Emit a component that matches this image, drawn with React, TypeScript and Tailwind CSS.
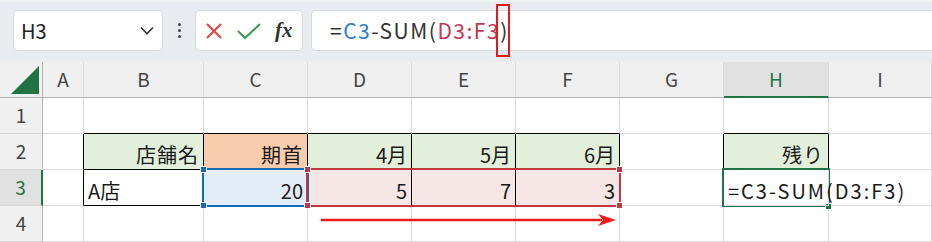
const COLS = ["", "A", "B", "C", "D", "E", "F", "G", "H", "I"];

const grid = "grid grid-cols-[43px_41px_120px_104px_104px_104px_104px_104px_105px_103px]";
const cell = "h-[36px] border-r border-b border-[#d9d9d9] flex items-end pb-[4px] px-[4px] text-[20px] leading-none text-[#1a1a1a]";

const Handle = ({ x, y, color }: { x: number; y: number; color: string }) => (
  <div
    className={`absolute w-[7px] h-[7px] border border-white ${color}`}
    style={{ left: x - 3, top: y - 3 }}
  />
);

export default function App() {
  return (
    <div className="w-[932px] h-[242px] overflow-hidden bg-white font-['Noto_Sans_CJK_JP',sans-serif]">
      {/* Formula bar */}
      <div className="h-[62px] bg-[#e8ebef] border-t-2 border-[#f2f4f6] flex items-start pt-[8px] pl-[13px] gap-[8px]">
        <div className="w-[150px] h-[41px] bg-white rounded-[5px] border border-[#d6d9dd] flex items-center justify-between pl-[7px] pr-[8px]">
          <span className="text-[20px] text-[#222]">H3</span>
          <svg width="14" height="9" viewBox="0 0 14 9">
            <polyline points="1,1.5 7,7.5 13,1.5" fill="none" stroke="#333" strokeWidth="1.6" />
          </svg>
        </div>
        <div className="w-[16px] h-[41px] flex flex-col items-center justify-center gap-[3px]">
          <span className="w-[3px] h-[3px] rounded-full bg-[#444]" />
          <span className="w-[3px] h-[3px] rounded-full bg-[#444]" />
          <span className="w-[3px] h-[3px] rounded-full bg-[#444]" />
        </div>
        <div className="w-[108px] h-[41px] bg-white rounded-[5px] border border-[#d6d9dd] flex items-center pl-[9px] gap-[14px]">
          <svg width="18" height="18" viewBox="0 0 18 18">
            <path d="M2 2 L16 16 M16 2 L2 16" stroke="#e8403f" strokeWidth="2" />
          </svg>
          <svg width="24" height="18" viewBox="0 0 24 18">
            <polyline points="1,9 8,16 23,2" fill="none" stroke="#3a9c4a" strokeWidth="2" />
          </svg>
          <span className="font-['Liberation_Serif',serif] italic font-bold text-[21px] text-[#333] leading-none">fx</span>
        </div>
        <div className="flex-1 h-[41px] bg-white rounded-l-[5px] border border-r-0 border-[#d6d9dd] flex items-center pl-[18px] text-[21px] tracking-[1.5px] text-[#333]">
          <span>=</span>
          <span className="text-[#2b7fd3]">C3</span>
          <span>-SUM(</span>
          <span className="text-[#c73452]">D3:F3</span>
          <span className="relative">
            )
            <span className="absolute left-[-4px] right-[-1px] top-[-11px] bottom-[-11px] border-2 border-[#e21b1b]" />
          </span>
        </div>
      </div>

      {/* Sheet */}
      <div className="relative">
        {/* Column headers */}
        <div className={grid}>
          <div className="h-[36px] bg-[#f0f0f0] border-r border-b border-[#b4b4b4] flex items-end justify-end pr-[3px] pb-[3px]">
            <svg width="28" height="28" viewBox="0 0 28 28">
              <polygon points="28,0 28,28 0,28" fill="#217346" />
            </svg>
          </div>
          {COLS.slice(1).map((c) =>
            c === "H" ? (
              <div key={c} className="h-[36px] bg-[#e1e1e1] border-r border-[#d9d9d9] border-b-2 border-b-[#217346] flex items-center justify-center text-[19px] text-[#217346]">
                {c}
              </div>
            ) : (
              <div key={c} className="h-[36px] bg-[#f0f0f0] border-r border-[#d9d9d9] border-b border-b-[#b4b4b4] flex items-center justify-center text-[19px] text-[#444]">
                {c}
              </div>
            )
          )}
        </div>

        {/* Row 1 */}
        <div className={grid}>
          <div className="h-[36px] bg-[#f0f0f0] border-r border-r-[#b4b4b4] border-b border-[#d9d9d9] flex items-center justify-center text-[19px] text-[#444]">1</div>
          <div className={cell} />
          <div className={`${cell} border-b-black`} />
          <div className={`${cell} border-b-black`} />
          <div className={`${cell} border-b-black`} />
          <div className={`${cell} border-b-black`} />
          <div className={`${cell} border-b-black`} />
          <div className={cell} />
          <div className={`${cell} border-b-black`} />
          <div className={cell} />
        </div>

        {/* Row 2 */}
        <div className={grid}>
          <div className="h-[36px] bg-[#f0f0f0] border-r border-r-[#b4b4b4] border-b border-[#d9d9d9] flex items-center justify-center text-[19px] text-[#444]">2</div>
          <div className={`${cell} border-r-black`} />
          <div className={`${cell} border-black bg-[#e2efda] justify-end tracking-[1px]`}>店舗名</div>
          <div className={`${cell} border-black bg-[#f8cbad] justify-end tracking-[1px]`}>期首</div>
          <div className={`${cell} border-black bg-[#e2efda] justify-end`}>4月</div>
          <div className={`${cell} border-black bg-[#e2efda] justify-end`}>5月</div>
          <div className={`${cell} border-black bg-[#e2efda] justify-end`}>6月</div>
          <div className={`${cell} border-r-black`} />
          <div className={`${cell} border-black bg-[#e2efda] justify-end tracking-[1px]`}>残り</div>
          <div className={cell} />
        </div>

        {/* Row 3 */}
        <div className={grid}>
          <div className="h-[36px] bg-[#e1e1e1] border-r-2 border-r-[#217346] border-b border-[#d9d9d9] flex items-center justify-center text-[19px] text-[#217346]">3</div>
          <div className={`${cell} border-r-black`} />
          <div className={`${cell} border-black`}>A店</div>
          <div className={`${cell} border-black bg-[#e3edf7] justify-end`}>20</div>
          <div className={`${cell} border-black bg-[#f6e6e6] justify-end`}>5</div>
          <div className={`${cell} border-black bg-[#f6e6e6] justify-end`}>7</div>
          <div className={`${cell} border-black bg-[#f6e6e6] justify-end`}>3</div>
          <div className={cell} />
          <div className={`${cell} overflow-visible whitespace-nowrap z-10 tracking-[2px]`}>=C3-SUM(D3:F3)</div>
          <div className={cell} />
        </div>

        {/* Row 4 */}
        <div className={grid}>
          <div className="h-[36px] bg-[#f0f0f0] border-r border-r-[#b4b4b4] border-b border-[#d9d9d9] flex items-center justify-center text-[19px] text-[#444]">4</div>
          {COLS.slice(1).map((c) => (
            <div key={c} className={cell} />
          ))}
        </div>

        {/* Selection overlays */}
        <div className="absolute left-[202px] top-[106px] w-[107px] h-[39px] border-2 border-[#1469b8]" />
        <div className="absolute left-[306px] top-[106px] w-[315px] h-[39px] border-2 border-[#c0383e]" />
        <div className="absolute left-[722px] top-[106px] w-[108px] h-[39px] border-2 border-[#217346]" />
        <Handle x={203} y={107} color="bg-[#1469b8]" />
        <Handle x={203} y={143} color="bg-[#1469b8]" />
        <Handle x={307} y={107} color="bg-[#c0383e]" />
        <Handle x={307} y={143} color="bg-[#c0383e]" />
        <Handle x={619} y={107} color="bg-[#c0383e]" />
        <Handle x={619} y={143} color="bg-[#c0383e]" />
        <Handle x={828} y={144} color="bg-[#217346]" />

        {/* Arrow */}
        <svg className="absolute left-[318px] top-[150px]" width="302" height="16" viewBox="0 0 302 16">
          <line x1="3" y1="8" x2="284" y2="8" stroke="#ee1c1c" strokeWidth="2.5" />
          <polygon points="280,2 298,8 280,14 285,8" fill="#ee1c1c" />
        </svg>
      </div>
    </div>
  );
}
